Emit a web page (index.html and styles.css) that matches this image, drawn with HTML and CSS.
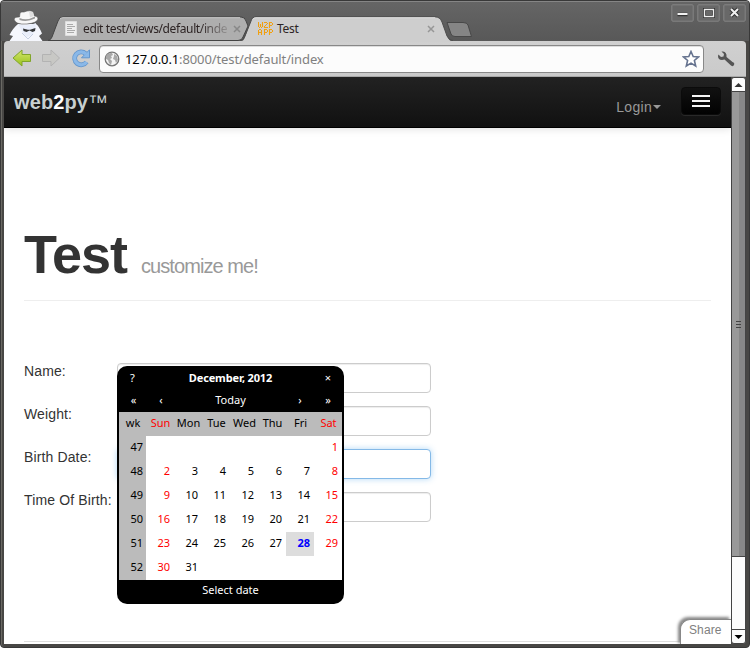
FILE: index.html
```html
<!DOCTYPE html>
<html lang="en">
<head>
<meta charset="utf-8">
<title>Test</title>
<link rel="stylesheet" href="styles.css">
</head>
<body>
<div class="window">
  <header class="titlebar">
    <svg class="spy" width="38" height="31" viewBox="0 0 38 31">
      <path d="M1.500 31 5 26 1.500 25Q5 18 10 14H28Q31 16 34 23.500L31 26 34.500 31Z" fill="#f5f7fd"/>
      <path d="M10 14Q19 17 28 13L27 21 24 25 19 27 15 23Z" fill="#e9eefa"/>
      <path d="M15 18.500 20 19.800 22 19.800 27.500 18 27 21 24.500 22 21.500 20.500 18.500 22 15.500 21Z" fill="#343638"/>
      <path d="M14 23 20 29 25 24" fill="none" stroke="#c6cfe2"/>
      <path d="M6 9Q7 6.500 11.500 7L12 3Q13 1.500 16 2L19 1Q22 .3 25 1.500L26.500 6Q30 6 30 9Q29 13 19 14Q7 15 6 9Z" fill="#f7f7f7" stroke="#555" stroke-width=".6"/>
      <path d="M11.500 8Q19 11 27 6.500L27 8.500Q19 12.500 11.500 10Z" fill="#999"/>
      <path d="M21 1.500 25 2 26 6 22 7.500Z" fill="#dedede"/>
    </svg>
    <div class="tab tab-back">
      <svg class="shape" width="202" height="25" viewBox="0 0 202 25">
        <path d="M0 24.500Q3 24 4 21L10 5Q11 1 15 1H193Q197 1 198 5L200 10 195 21Q194 24.500 190 24.500Z" fill="#aeaeae" stroke="#444" stroke-width="1"/>
        <path d="M12 3Q13 1.700 15 1.700H192" fill="none" stroke="#c9c9c9"/>
      </svg>
      <svg class="doc" width="12" height="15" viewBox="0 0 12 15"><path d="M.5.5h11v14H.5z" fill="#eee" stroke="#ddd"/><path d="M2 3.500h6M2 5.500h8M2 7.500h5M2 9.500h8M2 11.500h7" stroke="#aaa"/></svg>
      <span class="label fade">edit test/views/default/inde</span>
      <svg class="close" width="8" height="8" viewBox="0 0 8 8"><path d="m1 1 6 6M7 1 1 7" stroke="#888" stroke-width="1.500"/></svg>
    </div>
    <div class="tab tab-front">
      <svg class="shape" width="214" height="26" viewBox="0 0 214 26">
        <path d="M0 26Q4 25 5 21L11 5Q12 1 16 1H195Q200 1 202 6L207 20Q209 25 213 26Z" fill="#cecece"/>
        <path d="M0 24.500Q4 24 5 20L11 5Q12 .8 16 .8H195Q200 .8 202 6L207 20Q209 24.500 213 24.500" fill="none" stroke="#4d4d4d"/>
        <path d="M13 3Q14 1.800 16 1.800H195" fill="none" stroke="#dedede"/>
      </svg>
      <svg class="favicon" width="16" height="14" viewBox="0 0 16 14"><path d="M.5 0v5M1 5.500h1M2.500 2v3M3 5.500h1M4.500 0v5M6 .5h3M9.500 1v1M8 2.500h1M7 3.500h1M6.500 4v2M7 5.500h3M11.500 0v6M12 .5h2M14.500 1v2M12 3.500h2M.5 8v5M1 7.500h2M3.500 8v5M1 10.500h2M6.500 7v6M7 7.500h2M9.500 8v2M7 10.500h2M11.500 7v6M12 7.500h2M14.500 8v2M12 10.500h2" fill="none" stroke="#f0a010" stroke-width="1.100"/></svg>
      <span class="label">Test</span>
      <svg class="close" width="8" height="8" viewBox="0 0 8 8"><path d="m1 1 6 6M7 1 1 7" stroke="#969696" stroke-width="1.500"/></svg>
    </div>
    <svg class="newtab" width="28" height="17" viewBox="0 0 28 17"><path d="M1 1.500H17Q21 1.500 22 4L25.500 15.500H9Q6 15.500 5 13Z" fill="#858585" stroke="#484848"/></svg>
    <div class="controls">
      <svg width="23" height="18" viewBox="0 0 23 18"><rect x=".8" y=".8" width="21.400" height="16.400" rx="1" fill="#686868" stroke="#858585"/><path d="M6.500 10.500h10" stroke="#333" stroke-width="3.500"/><path d="M6.500 10h10" stroke="#f0f0f0" stroke-width="2"/></svg>
      <svg width="23" height="18" viewBox="0 0 23 18"><rect x=".8" y=".8" width="21.400" height="16.400" rx="1" fill="#686868" stroke="#858585"/><rect x="7.500" y="5.500" width="9" height="7" fill="none" stroke="#333" stroke-width="3"/><path d="M7.500 5v7.500h9V5M7 5.500h10" fill="none" stroke="#eee" stroke-width="1.400"/></svg>
      <svg width="23" height="18" viewBox="0 0 23 18"><rect x=".8" y=".8" width="21.400" height="16.400" rx="1" fill="#686868" stroke="#858585"/><path d="m8 5 7 7M15 5l-7 7" stroke="#333" stroke-width="4"/><path d="m8 5 7 7M15 5l-7 7" stroke="#f0f0f0" stroke-width="2"/></svg>
    </div>
  </header>
  <div class="toolbar">
    <svg width="20" height="20" viewBox="0 0 20 20"><defs><linearGradient id="g" x2="0" y2="1"><stop stop-color="#d4e66d"/><stop offset="1" stop-color="#98c21c"/></linearGradient></defs><path d="M1 9 10 1V5.500h8.500v7H10V17Z" fill="url(#g)" stroke="#81a52b"/></svg>
    <svg class="fwd" width="20" height="20" viewBox="0 0 20 20"><path d="M18.500 9 10 1V5.500H1.500v7H10V17Z" fill="#c8c8c5" stroke="#b3b3b3"/></svg>
    <svg class="reload" width="20" height="20" viewBox="0 0 20 20"><path d="M15.500 13A6.500 6.500 0 1 1 14.500 4.500" fill="none" stroke="#6496cc" stroke-width="4.800"/><path d="M18.500 .8v8H10.500Z" fill="#8ab8e8" stroke="#6496cc"/><path d="M15.500 13A6.500 6.500 0 1 1 15 5" fill="none" stroke="#8ab8e8" stroke-width="3.200"/></svg>
    <div class="address">
      <svg width="16" height="16" viewBox="0 0 16 16"><circle cx="8" cy="8" r="6.800" fill="#f4f4f4" stroke="#777" stroke-width="1.300"/><path d="M2 5Q4 1.500 8 2L9 4 7 5 8 7 6 8 8 10 7 14 5 12 4 9 2 8ZM10 3l3 2 1 4-2 3-1-3-2-1 1-3Z" fill="#a8a8a8"/></svg>
      <span class="url"><b>127.0.0.1</b>:8000/test/default/index</span>
      <svg class="star" width="18" height="18" viewBox="0 0 18 18"><path d="m9 1.500 2.200 5 5.300.4-4.100 3.600 1.300 5.500L9 13.100 4.300 16l1.300-5.500L1.500 6.900l5.300-.4Z" fill="#fff" stroke="#66738f" stroke-width="1.600"/></svg>
    </div>
    <svg class="wrench" width="18" height="18" viewBox="0 0 18 18"><path d="M1 6Q1 10 5 10L7.500 9.500 14 15.500Q16 17 17 15T15.500 12L9.500 7Q10 2 6 1.500L4.500 1.600 7 4 6.500 6.500 4 7 1.500 4.500Z" fill="#555"/></svg>
  </div>
  <div class="viewport">
    <div class="page">
      <nav class="navbar">
        <div class="brand">web<b>2</b>py<span class="tm">™</span></div>
        <div class="login">Login<i></i></div>
        <div class="menu"><i></i><i></i><i></i></div>
      </nav>
      <main>
        <div class="heading"><h1>Test</h1><small>customize me!</small></div>
        <form>
          <div class="row"><label>Name:</label><div class="input"></div></div>
          <div class="row"><label>Weight:</label><div class="input"></div></div>
          <div class="row"><label>Birth Date:</label><div class="input focus"></div></div>
          <div class="row"><label>Time Of Birth:</label><div class="input"></div></div>
        </form>
        <div class="footer-line"></div>
      </main>
      <div class="calendar">
        <div class="cal-title"><span>?</span><b>December, 2012</b><span>×</span></div>
        <div class="cal-nav"><span>«</span><span>‹</span><span class="today">Today</span><span>›</span><span>»</span></div>
        <div class="grid days"><span>wk</span><span class="we">Sun</span><span>Mon</span><span>Tue</span><span>Wed</span><span>Thu</span><span>Fri</span><span class="we">Sat</span></div>
        <div class="grid dates">
          <span class="wk">47</span><span></span><span></span><span></span><span></span><span></span><span></span><span class="we">1</span>
          <span class="wk">48</span><span class="we">2</span><span>3</span><span>4</span><span>5</span><span>6</span><span>7</span><span class="we">8</span>
          <span class="wk">49</span><span class="we">9</span><span>10</span><span>11</span><span>12</span><span>13</span><span>14</span><span class="we">15</span>
          <span class="wk">50</span><span class="we">16</span><span>17</span><span>18</span><span>19</span><span>20</span><span>21</span><span class="we">22</span>
          <span class="wk">51</span><span class="we">23</span><span>24</span><span>25</span><span>26</span><span>27</span><span class="sel">28</span><span class="we">29</span>
          <span class="wk">52</span><span class="we">30</span><span>31</span><span></span><span></span><span></span><span></span><span></span>
        </div>
        <div class="cal-foot">Select date</div>
      </div>
      <div class="share">Share</div>
    </div>
    <div class="scrollbar">
      <div class="arrow"><svg width="13" height="13" viewBox="0 0 13 13"><path d="m2.500 9 4-4 4 4Z" fill="#333"/></svg></div>
      <div class="thumb"><i></i><i></i><i></i></div>
      <div class="track"></div>
      <div class="arrow down"><svg width="13" height="13" viewBox="0 0 13 13"><path d="m2.500 5 4 4 4-4Z" fill="#000"/></svg></div>
    </div>
  </div>
</div>
</body>
</html>
```
FILE: styles.css
```css
* { box-sizing: border-box; }
body { margin: 0; background: #fff; font-family: "Liberation Sans", sans-serif; }
.window {
  width: 750px; height: 648px; overflow: hidden;
  display: flex; flex-direction: column;
  border: 1px solid #383838; border-radius: 4px;
  background: #484745; padding: 0 3px 3px;
  box-shadow: inset 1px 0 #6a6964;
}
.titlebar {
  height: 40px; flex: none; display: flex; align-items: flex-end;
  margin: 0 -3px; padding-left: 7px;
  background: linear-gradient(#858585 0 1px, #656565 1px, #585858);
  font: 12px "Noto Sans", sans-serif;
}
.spy { flex: none; }
.tab { position: relative; height: 25px; flex: none; display: flex; align-items: center; }
.shape { position: absolute; left: 0; top: 0; }
.tab > :not(.shape) { position: relative; }
.tab-back { width: 202px; margin-left: 2px; padding-left: 17px; }
.tab-front { width: 214px; margin-left: -10px; padding-left: 18px; z-index: 1; }
.label { color: #2d2424; margin-left: 6px; line-height: 16px; white-space: nowrap; letter-spacing: -.3px; }
.tab-front .label { width: 148px; margin-left: 3px; }
.fade { width: 145px; margin-left: 6px; letter-spacing: -.38px; -webkit-mask-image: linear-gradient(90deg, #000 80%, transparent 104%); mask-image: linear-gradient(90deg, #000 80%, transparent 104%); }
.tab-back .close { margin-left: 5px; }
.tab-front .close { margin-left: 2px; }
.newtab { margin: 0 0 3px -8px; flex: none; }
.controls { align-self: flex-start; display: flex; gap: 3px; margin: 3px 0 0 auto; padding-right: 3px; }
.toolbar {
  height: 36px; flex: none; display: flex; align-items: center;
  background: linear-gradient(#d0d0d0, #cacaca); border-bottom: 1px solid #a8a8a8;
  border-radius: 4px 4px 0 0; padding-left: 8px;
}
.fwd { margin-left: 9px; }
.reload { margin-left: 10px; }
.address {
  width: 605px; height: 28px; margin-left: 8px; padding: 0 3px 0 4px;
  display: flex; align-items: center; background: #fcfcfc;
  border: 1px solid #888; border-radius: 4px; box-shadow: inset 0 1px #ddd;
  font: 13px "Noto Sans", sans-serif;
}
.url { margin-left: 5px; color: #808080; line-height: 20px; letter-spacing: -.11px; }
.url b { font-weight: 400; color: #000; }
.star { margin-left: auto; }
.wrench { margin-left: 13px; }
.viewport { flex: 1; display: flex; min-height: 0; }
.page { position: relative; width: 727px; background: #fff; overflow: hidden; }
.navbar {
  height: 51px; display: flex; align-items: center; padding: 0 10px;
  background: linear-gradient(#222, #111); border-bottom: 1px solid #000;
  box-shadow: 0 1px 8px rgba(0, 0, 0, .12);
}
.brand { color: #c8d0d0; font-size: 20px; font-weight: 700; line-height: 24px; letter-spacing: .1px; }
.brand b { color: #fff; }
.tm { font-weight: 400; }
.login { margin: 9px 20px 0 auto; display: flex; align-items: center; gap: 1px; color: #999; font-size: 14px; line-height: 20px; letter-spacing: .3px; }
.login i { border: 4px solid transparent; border-top-color: #999; border-bottom: 0; }
.menu {
  width: 40px; height: 28px; border-radius: 4px; border: 1px solid #0b0b0b; margin-top: -2px;
  background: linear-gradient(#111, #020202); box-shadow: 0 1px #292929;
  display: flex; flex-direction: column; align-items: center; justify-content: center; gap: 3px;
}
.menu i { width: 18px; height: 2px; background: #f5f5f5; }
main { padding: 92px 20px 0; }
.heading { height: 81px; border-bottom: 1px solid #eee; display: flex; align-items: baseline; }
h1 { margin: 0; color: #333; font-size: 54px; line-height: 68px; letter-spacing: -1px; }
small { color: #999; font-size: 20px; letter-spacing: -.93px; margin-left: 14px; }
form { padding-top: 62px; color: #333; font-size: 14px; letter-spacing: .13px; }
.row { height: 43px; display: flex; }
label { width: 93px; line-height: 16px; white-space: nowrap; }
.input { width: 314px; height: 30px; border: 1px solid #ccc; border-radius: 4px; background: #fff; box-shadow: inset 0 1px 1px rgba(0,0,0,.075); }
.focus { border-color: #84b9e7; box-shadow: 0 0 6px rgba(82,168,236,.45); }
.footer-line { margin-top: 106px; height: 1px; background: #ddd; }
.calendar {
  position: absolute; left: 113px; top: 289px; width: 227px; height: 238px;
  background: #000; color: #fff; border-radius: 10px; padding: 0 2px;
  font: 11px/24px "Noto Sans", sans-serif;
}
.cal-title { display: grid; grid-template-columns: 27px 1fr 28px; text-align: center; height: 24px; }
.cal-title b { letter-spacing: -.15px; padding-left: 1px; }
.cal-nav { display: grid; grid-template-columns: 27px 28px 1fr 28px 28px; text-align: center; line-height: 20px; height: 22px; padding-left: 1px; }
.grid { display: grid; grid-template-columns: 27px repeat(7, 28px); grid-auto-rows: 24px; color: #000; }
.days { background: #bbb; text-align: center; line-height: 22px; }
.days span { padding-left: 1px; }
.dates { background: #fff; text-align: right; line-height: 22px; }
.dates span { padding-right: 4px; }
.dates .wk { background: #bbb; padding-right: 3px; }
.grid .we { color: #f00; }
.dates .sel { background: #ddd; color: #00f; font-weight: 700; }
.cal-foot { text-align: center; line-height: 20px; }
.share {
  position: absolute; left: 676px; top: 542px; width: 51px; height: 26px;
  border: 1px solid #888; border-width: 1px 0 0 1px; border-top-left-radius: 10px;
  background: #fff; color: #808080; font-size: 12px; line-height: 21px; padding-left: 8px; letter-spacing: .1px;
  box-shadow: -2px -2px 3px #888;
}
.scrollbar { width: 15px; display: flex; flex-direction: column; border: 1px solid #444; background: #fcfcfc; border-radius: 3px; overflow: hidden; }
.arrow { height: 14px; flex: none; border-bottom: 1px solid #444; display: flex; }
.thumb {
  height: 465px; flex: none; border-bottom: 1px solid #444;
  background: linear-gradient(90deg, #999 50%, #888 50%);
  display: flex; flex-direction: column; align-items: center; justify-content: center; gap: 2px;
}
.thumb i { width: 5px; height: 1px; background: #444; }
.track { flex: 1; }
.down { border-top: 1px solid #444; border-bottom: 0; height: 14px; }
```
